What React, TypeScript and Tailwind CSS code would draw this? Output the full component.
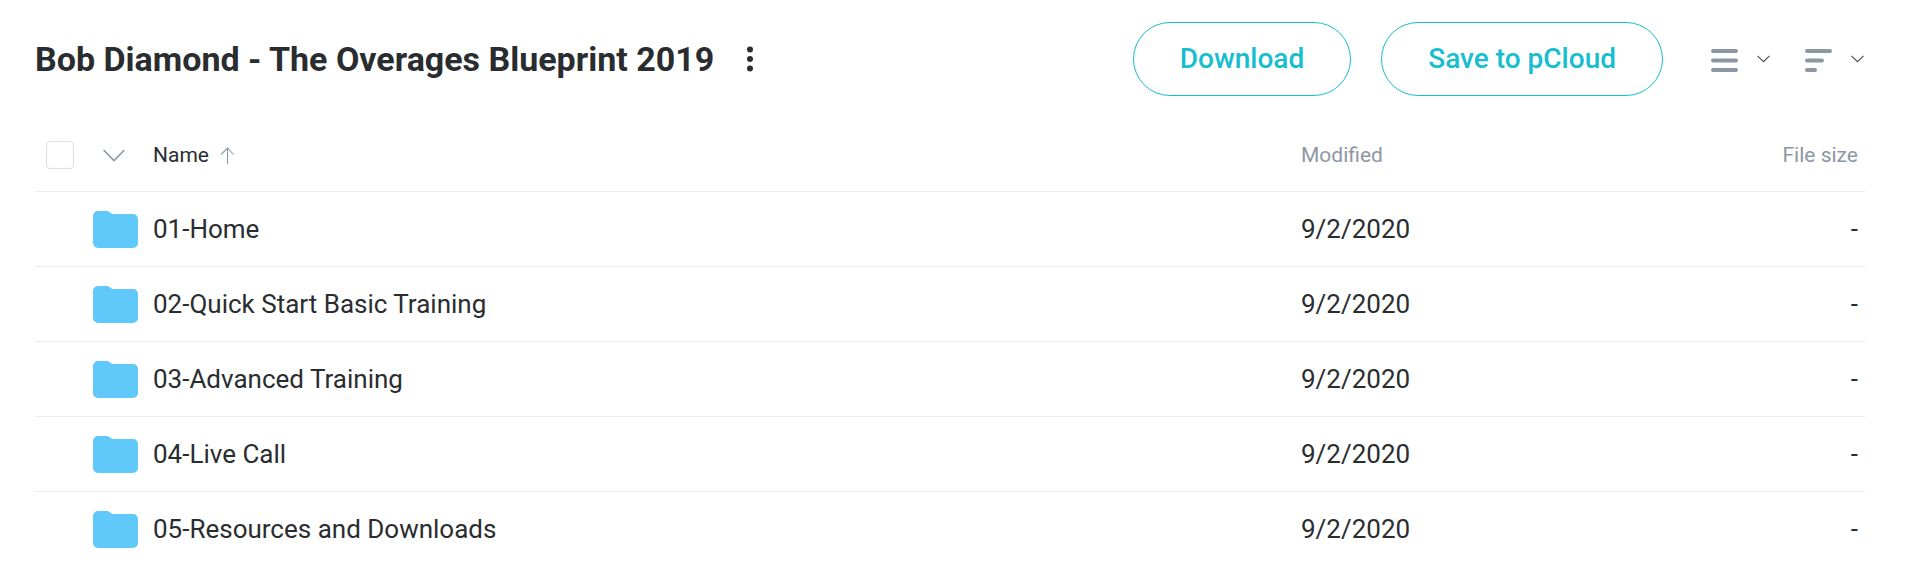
import React from 'react';

interface Entry {
  name: string;
  modified: string;
  size: string;
}

const entries: Entry[] = [
  { name: '01-Home', modified: '9/2/2020', size: '-' },
  { name: '02-Quick Start Basic Training', modified: '9/2/2020', size: '-' },
  { name: '03-Advanced Training', modified: '9/2/2020', size: '-' },
  { name: '04-Live Call', modified: '9/2/2020', size: '-' },
  { name: '05-Resources and Downloads', modified: '9/2/2020', size: '-' },
];

const FolderIcon = () => (
  <svg width="45" height="37" viewBox="0 0 45 37" fill="#61c8fa" aria-hidden="true">
    <path d="M5 0h9c3 0 3.500 3 6 3h20a5 5 0 0 1 5 5v24a5 5 0 0 1-5 5H5a5 5 0 0 1-5-5V5a5 5 0 0 1 5-5z" />
  </svg>
);

const SmallChevron = () => (
  <svg width="13" height="8" viewBox="0 0 13 8" fill="none" stroke="#4a4e52" strokeWidth="1.1" aria-hidden="true">
    <path d="M.5 .8l6 5.900 6-5.900" />
  </svg>
);

const ListIcon = () => (
  <svg width="27" height="26" viewBox="0 0 27 26" fill="#8d97a3" aria-hidden="true">
    <rect y="3" width="27" height="4" rx="2" />
    <rect y="12.500" width="27" height="4" rx="2" />
    <rect y="22" width="27" height="4" rx="2" />
  </svg>
);

const SortIcon = () => (
  <svg width="27" height="26" viewBox="0 0 27 26" fill="#8d97a3" aria-hidden="true">
    <rect y="3" width="27" height="4" rx="2" />
    <rect y="12.500" width="19" height="4" rx="2" />
    <rect y="22" width="12" height="4" rx="2" />
  </svg>
);

const PillButton = ({ children }: { children: React.ReactNode }) => (
  <button
    type="button"
    className="h-[74px] rounded-full border border-[#17bed0] px-[46px] text-[28px] font-medium whitespace-nowrap text-[#17bed0]"
  >
    {children}
  </button>
);

const App: React.FC = () => {
  return (
    <div className="h-screen overflow-hidden bg-white pt-[22px] pr-[42px] pl-[35px] font-[Roboto,sans-serif] text-[#2a2d30]">

      {/* Folder title and actions */}
      <header className="flex items-center justify-between pr-px pb-[23px]">
        <div className="flex items-center gap-[30px]">
          <h1 className="text-[34px] leading-[40px] font-bold whitespace-nowrap">Bob Diamond - The Overages Blueprint 2019</h1>
          <button type="button" aria-label="More options">
            <svg width="12" height="26" viewBox="0 0 12 26" fill="#2a2d30" aria-hidden="true">
              <circle cx="6" cy="3.500" r="3" />
              <circle cx="6" cy="13" r="3" />
              <circle cx="6" cy="22.500" r="3" />
            </svg>
          </button>
        </div>

        <div className="flex items-center">
          <div className="flex gap-[30px]">
            <PillButton>Download</PillButton>
            <PillButton>Save to pCloud</PillButton>
          </div>
          <div className="ml-12 flex gap-[35px]">
            <button type="button" aria-label="View" className="flex items-center gap-[19px]">
              <ListIcon />
              <SmallChevron />
            </button>
            <button type="button" aria-label="Sort" className="flex items-center gap-[19px]">
              <SortIcon />
              <SmallChevron />
            </button>
          </div>
        </div>
      </header>

      {/* File list */}
      <table className="w-full table-fixed border-collapse text-left">
        <colgroup>
          <col className="w-[58px]" />
          <col className="w-[60px]" />
          <col />
          <col className="w-[364px]" />
          <col className="w-[200px]" />
        </colgroup>
        <thead>
          <tr className="h-[72px] border-b border-[#ececec] text-[21px] text-[#8d97a3]">
            <th className="pl-[11px]">
              <input
                type="checkbox"
                aria-label="Select all"
                className="block size-7 appearance-none rounded-sm border border-[#dfdfdf] bg-white"
              />
            </th>
            <th className="pt-0.5">
              <button type="button" aria-label="Selection options" className="ml-[10px] block">
                <svg width="22" height="13" viewBox="0 0 22 13" fill="none" stroke="#8d97a3" strokeWidth="1.600" aria-hidden="true">
                  <path d="M.6 1l10.400 10.500L21.400 1" />
                </svg>
              </button>
            </th>
            <th className="pt-0.5 font-normal text-[#2a2d30]">
              <button type="button" className="flex items-center gap-[11px]">
                Name
                <svg width="14" height="17" viewBox="0 0 14 17" fill="none" stroke="#8d97a3" strokeWidth="1.100" aria-hidden="true">
                  <path d="M7.500 17V1M1 7.500l6.500-6.500L13.500 7.500" />
                </svg>
              </button>
            </th>
            <th className="pt-0.5 font-normal">Modified</th>
            <th className="pt-0.5 pr-[7px] text-right font-normal">File size</th>
          </tr>
        </thead>
        <tbody>
          {entries.map((entry) => (
            <tr key={entry.name} className="h-[75px] border-b border-[#ececec] text-[26px]">
              <td />
              <td className="pt-0.5">
                <FolderIcon />
              </td>
              <td className="pt-0.5">
                <a href="#">{entry.name}</a>
              </td>
              <td className="pt-0.5">{entry.modified}</td>
              <td className="pt-0.5 pr-[7px] text-right">{entry.size}</td>
            </tr>
          ))}
        </tbody>
      </table>

    </div>
  );
};

export default App;
